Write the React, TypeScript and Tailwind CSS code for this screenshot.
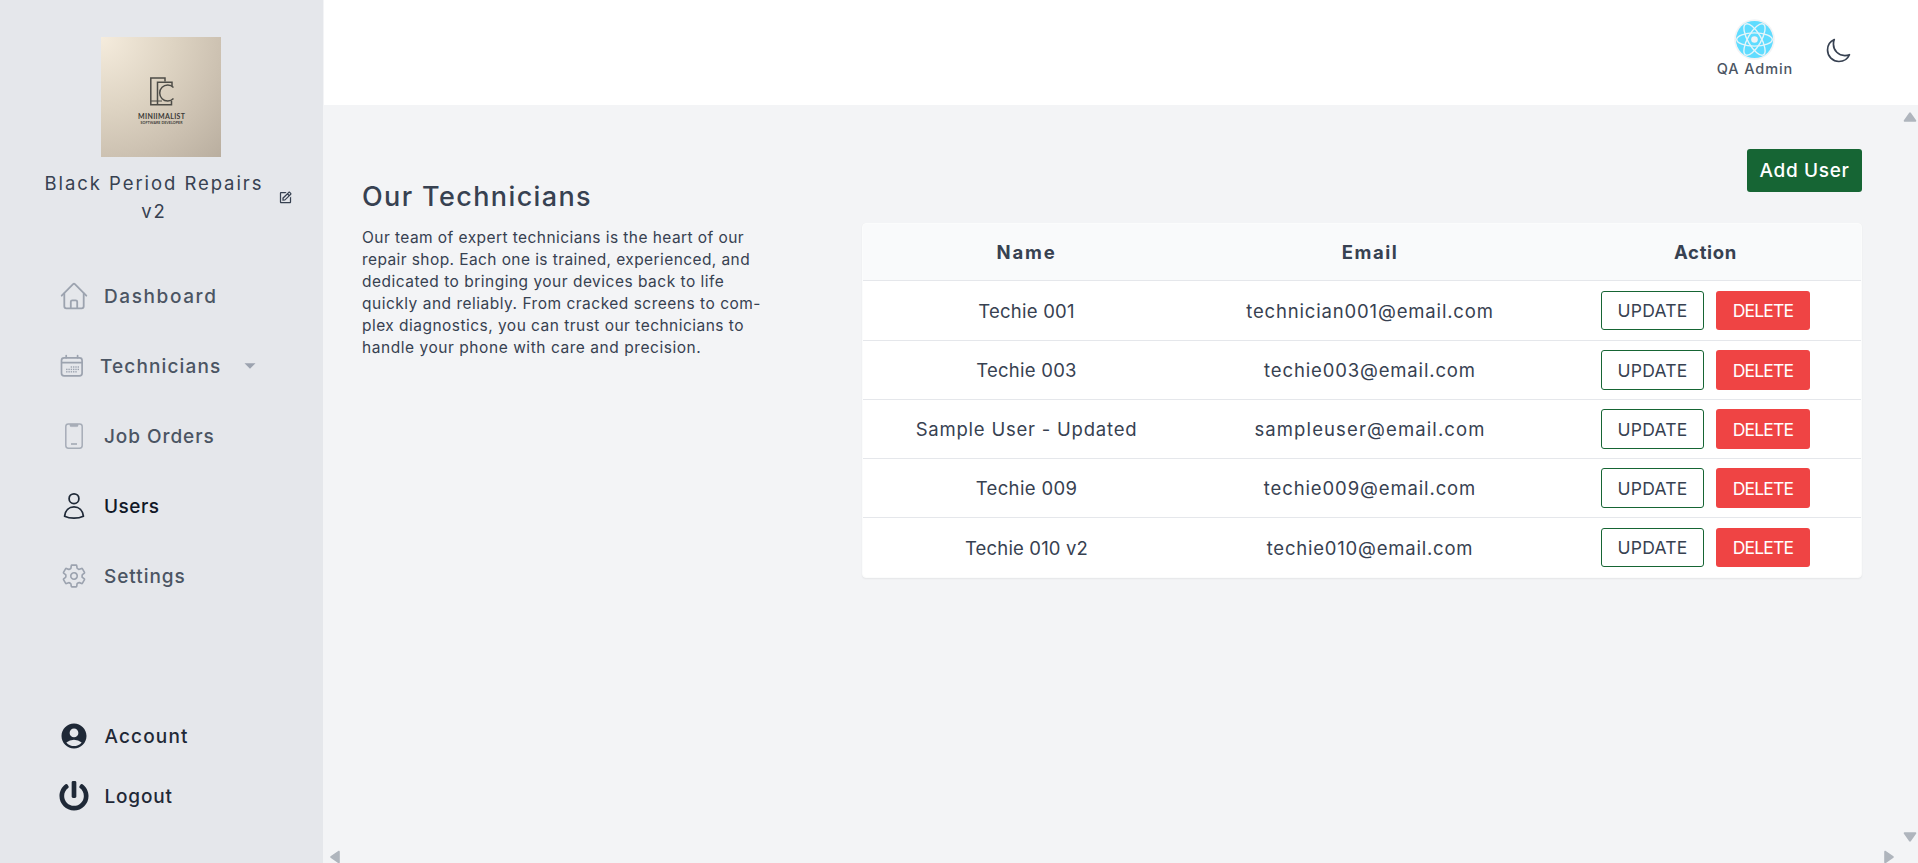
import type { ReactNode } from 'react';
import { IoMoonOutline, IoSettingsOutline } from 'react-icons/io5';
import { FaPowerOff } from 'react-icons/fa';
import { MdAccountCircle } from 'react-icons/md';
import { BiEdit } from 'react-icons/bi';

function BrandLogo() {
  return (
    <div className="h-[120px] w-[120px] bg-[radial-gradient(circle_at_0%_0%,#f5ecdd_0%,#ded4c3_42%,#cdc2b2_70%,#b9ae9f_100%)]">
      <svg viewBox="0 0 120 120" className="h-[120px] w-[120px]" fill="none" stroke="#4d4c47" strokeWidth="1.5">
        <path d="M64 44.500V41H49.800V67.700H70.500V64" />
        <path d="M56.500 67.700V45.300H71V49" />
        <path d="M72.500 50.500A8 8 0 1 0 72.500 61.500" />
        <path d="M50 64H61" strokeWidth="1" />
        <g fill="#3c3b38" stroke="none" textAnchor="middle" className="font-['Lato'] font-bold">
          <text x="60.500" y="81.500" fontSize="7" textLength="47">MINIIMALIST</text>
          <text x="60.500" y="87" fontSize="3.600" textLength="42">SOFTWARE DEVELOPER</text>
        </g>
      </svg>
    </div>
  );
}

function HomeIcon() {
  return (
    <svg viewBox="0 0 28 28" className="size-7" fill="none" stroke="currentColor" strokeWidth="1.8" strokeLinecap="round" strokeLinejoin="round">
      <path d="M1.700 13.700 13.100 2.200a1.300 1.300 0 0 1 1.800 0L26.300 13.700" />
      <path d="M4.300 11.500V24.300c0 1.200.8 2 2 2H21.700c1.200 0 2-.8 2-2V11.500" />
      <path d="M10.800 26V19.800c0-.9.6-1.500 1.500-1.500h3.400c.9 0 1.500.6 1.500 1.500V26" />
    </svg>
  );
}

const calendarDots: [number, number][] = [
  [10.7, 13], [13, 13], [15.300, 13], [17.600, 13],
  [6.100, 15.400], [8.400, 15.400], [10.700, 15.400], [13, 15.400], [15.300, 15.400], [17.600, 15.400],
  [6.100, 17.800], [8.400, 17.800], [10.700, 17.800], [13, 17.800], [15.300, 17.800],
];

function CalendarIcon() {
  return (
    <svg viewBox="0 0 24 24" className="size-6" fill="none" stroke="currentColor" strokeWidth="1.7" strokeLinecap="round">
      <rect x="1.500" y="3.900" width="20.600" height="18" rx="2.600" />
      <path d="M1.800 8.600h20M6.200 1.500v2.200M17.600 1.500v2.200" />
      {calendarDots.map(([x, y]) => (
        <rect key={`${x}-${y}`} x={x} y={y - 0.7} width="1.400" height="1.400" fill="currentColor" stroke="none" />
      ))}
    </svg>
  );
}

function PhoneIcon() {
  return (
    <svg viewBox="0 0 28 28" className="size-7 opacity-85" fill="none" stroke="currentColor" strokeWidth="1.500">
      <rect x="5.800" y="2" width="16.400" height="24.200" rx="2.600" />
      <path d="M10 2.200h8v1.200a1.200 1.200 0 0 1-1.200 1.200h-5.600A1.200 1.200 0 0 1 10 3.400z" fill="currentColor" strokeWidth=".6" />
      <path d="M11 22h6" strokeWidth="1.700" />
    </svg>
  );
}

function PersonIcon() {
  return (
    <svg viewBox="0 0 28 28" className="size-7" fill="none" stroke="currentColor" strokeWidth="1.75" strokeLinejoin="round">
      <circle cx="14" cy="6.700" r="4.900" />
      <path d="M4.600 24.200C5.200 18.500 9 14.900 14 14.900s8.800 3.600 9.400 9.300C20.800 25.500 17.500 26.200 14 26.200s-6.800-.7-9.400-2z" />
    </svg>
  );
}

function Avatar() {
  return (
    <svg viewBox="0 0 41 41" className="size-[41px]">
      <circle cx="20.500" cy="20.500" r="20.300" fill="#f1f3f5" />
      <circle cx="20.500" cy="20.500" r="18.600" fill="#5fdcff" />
      <g fill="none" stroke="#e4f5fa" strokeWidth="1.400">
        <ellipse cx="20.500" cy="20.500" rx="17.800" ry="6.600" />
        <ellipse cx="20.500" cy="20.500" rx="17.800" ry="6.600" transform="rotate(60 20.500 20.500)" />
        <ellipse cx="20.500" cy="20.500" rx="17.800" ry="6.600" transform="rotate(120 20.500 20.500)" />
      </g>
      <circle cx="20.500" cy="20.500" r="3.300" fill="#f1f3f5" />
    </svg>
  );
}

function NavItem({ icon, label, className, children }: { icon: ReactNode; label: string; className: string; children?: ReactNode }) {
  return (
    <a className={`flex items-center gap-4 text-[19px] font-medium ${className}`}>
      {icon}
      <span className="pt-0.5">{label}</span>
      {children}
    </a>
  );
}

function Sidebar() {
  return (
    <aside className="flex h-full w-[323px] shrink-0 flex-col bg-[#e5e7eb] pt-[37px]">
      <div className="ml-[101px]"><BrandLogo /></div>
      <div className="mt-3 flex h-14 items-center text-[#374151]">
        <h1 className="ml-11 w-[220px] text-center text-[18.500px] leading-7 whitespace-nowrap tracking-[1.93px]">
          Black Period Repairs
          <br />
          v2
        </h1>
        <BiEdit className="ml-[13.5px] size-[15px]" />
      </div>
      <nav className="mt-9 flex flex-col text-[#4b5563]">
        <NavItem className="h-[70px] pl-[60px] tracking-[1.6px]" label="Dashboard" icon={<span className="text-[#9ca3af]"><HomeIcon /></span>} />
        <NavItem className="h-[70px] pl-[60px] tracking-[1.13px]" label="Technicians" icon={<span className="text-[#9ca3af]"><CalendarIcon /></span>}>
          <svg viewBox="0 0 12 6" className="ml-[7px] h-1.5 w-3 text-[#9ca3af]" fill="currentColor"><path d="M.5.300h11L6 5.800z" /></svg>
        </NavItem>
        <NavItem className="h-[70px] pl-[60px] tracking-[0.94px]" label="Job Orders" icon={<span className="text-[#9ca3af]"><PhoneIcon /></span>} />
        <NavItem className="h-[70px] pl-[60px] tracking-[0.5px] text-[#111827]" label="Users" icon={<span className="text-[#1f2937]"><PersonIcon /></span>} />
        <NavItem className="h-[70px] pl-[60px] tracking-[0.95px]" label="Settings" icon={<span className="flex w-7 justify-center text-[#9ca3af]"><IoSettingsOutline className="size-[26px]" /></span>} />
      </nav>
      <div className="mt-auto mb-[37px] flex flex-col text-[#1f2937]">
        <NavItem className="h-[60px] pl-[58.5px] tracking-[1.15px]" label="Account" icon={<MdAccountCircle className="size-[30px]" />} />
        <NavItem className="h-[60px] pl-[58.5px] tracking-[0.82px]" label="Logout" icon={<FaPowerOff className="size-[30px]" />} />
      </div>
    </aside>
  );
}

const users = [
  { name: 'Techie 001', nameFit: 'tracking-[0.24px]', email: 'technician001@email.com', emailFit: 'tracking-[0.84px]', row: 'h-[60px]', button: 'h-[39px]' },
  { name: 'Techie 003', nameFit: 'tracking-[0.25px]', email: 'techie003@email.com', emailFit: 'tracking-[0.85px]', row: 'h-[59px]', button: 'h-10' },
  { name: 'Sample User - Updated', nameFit: 'tracking-[0.78px]', email: 'sampleuser@email.com', emailFit: 'tracking-[1.12px]', row: 'h-[59px]', button: 'h-10' },
  { name: 'Techie 009', nameFit: 'tracking-[0.34px]', email: 'techie009@email.com', emailFit: 'tracking-[0.88px]', row: 'h-[59px]', button: 'h-10' },
  { name: 'Techie 010 v2', nameFit: 'tracking-[0.16px]', email: 'techie010@email.com', emailFit: 'tracking-[0.79px]', row: 'h-[59px]', button: 'h-[39px]' },
];

const columns = 'grid grid-cols-[327px_360px_311px] items-center justify-items-center';

function UsersTable() {
  return (
    <div className="mt-[31px] w-[1000px] overflow-hidden rounded border border-[#fbfcfc] bg-white text-[18.500px] shadow-[0_1px_2px_rgba(0,0,0,0.06)]">
      <div className={`${columns} h-[57px] border-b border-[#e5e7eb] bg-[#f9fafb] pt-0.5 font-bold`}>
        <span className="tracking-[1.83px]">Name</span>
        <span className="tracking-[1.5px]">Email</span>
        <span className="tracking-[0.66px]">Action</span>
      </div>
      {users.map((u) => (
        <div key={u.email} className={`${columns} ${u.row} border-b border-[#e5e7eb] last:border-b-0`}>
          <span className={`pt-0.5 ${u.nameFit}`}>{u.name}</span>
          <span className={`pt-0.5 ${u.emailFit}`}>{u.email}</span>
          <div className="flex gap-3 text-[17.500px]">
            <button className={`${u.button} w-[103px] rounded-[3px] border border-[#166534] pt-0.5 tracking-[0.22px]`}>UPDATE</button>
            <button className={`${u.button} w-[94px] rounded-[3px] bg-[#ef4444] pt-0.5 tracking-[-0.8px] text-white`}>DELETE</button>
          </div>
        </div>
      ))}
    </div>
  );
}

function ScrollArrow({ className }: { className: string }) {
  return (
    <svg viewBox="0 0 14 10" className={`absolute h-2.5 w-3.5 text-[#afb5bd] ${className}`} fill="currentColor">
      <path d="M6 .9a1.200 1.200 0 0 1 2 0l5.100 7.300c.5.800 0 1.600-.9 1.600H1.800c-.9 0-1.400-.8-.9-1.600z" />
    </svg>
  );
}

export default function App() {
  return (
    <div className="flex h-[863px] w-[1918px] overflow-hidden bg-[#f3f4f6] font-['Inter',sans-serif] text-[#374151]">
      <Sidebar />
      <div className="flex min-w-0 flex-1 flex-col">
        <header className="ml-px flex h-[105px] items-start justify-end bg-white pr-[66px]">
          <div className="mt-[19px] flex w-[77px] flex-col items-center text-[#4b5563]">
            <Avatar />
            <span className="ml-px text-[14.500px] leading-[18px] font-medium tracking-[0.9px] whitespace-nowrap">QA Admin</span>
          </div>
          <IoMoonOutline className="mt-[37px] ml-[32px] size-[27px] text-[#374151]" />
        </header>
        <main className="relative flex flex-1 justify-between pr-14 pl-[39px]">
          <section className="pt-[74px]">
            <h2 className="text-[27px] leading-[35px] font-medium tracking-[1.38px]">Our Technicians</h2>
            <p className="mt-[12.500px] text-[15.500px] leading-[22px] whitespace-nowrap">
              <span className="block tracking-[0.43px]">Our team of expert technicians is the heart of our</span>
              <span className="block tracking-[0.41px]">repair shop. Each one is trained, experienced, and</span>
              <span className="block tracking-[0.49px]">dedicated to bringing your devices back to life</span>
              <span className="block tracking-[0.5px]">quickly and reliably. From cracked screens to com-</span>
              <span className="block tracking-[0.47px]">plex diagnostics, you can trust our technicians to</span>
              <span className="block tracking-[0.55px]">handle your phone with care and precision.</span>
            </p>
          </section>
          <section className="flex flex-col items-end pt-11">
            <button className="h-[43px] w-[115px] rounded-[3px] bg-[#166534] pt-0.5 text-[19px] font-medium tracking-[0.66px] text-white">Add User</button>
            <UsersTable />
          </section>
          <ScrollArrow className="top-[7px] right-[1.5px]" />
          <ScrollArrow className="right-[1.5px] bottom-[21px] rotate-180" />
          <ScrollArrow className="bottom-[1px] left-[4.5px] -rotate-90" />
          <ScrollArrow className="right-[22px] bottom-[1px] rotate-90" />
        </main>
      </div>
    </div>
  );
}
